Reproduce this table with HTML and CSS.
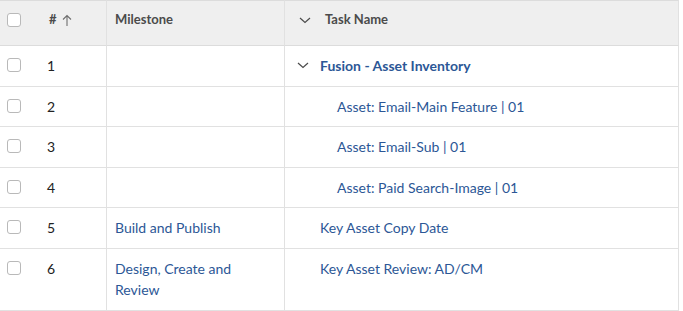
FILE: index.html
```html
<!DOCTYPE html>
<html lang="en">
<head>
  <meta charset="UTF-8" />
  <title>Tasks</title>
  <link rel="stylesheet" href="styles.css">
</head>
<body>
  <div class="grid">
    <!-- Header -->
    <div class="cell head check"><span class="box"></span></div>
    <div class="cell head num">#
      <svg class="sort" width="10" height="12" viewBox="0 0 10 12"><path d="M5 1.5V12M1 5.5L5 1.5L9 5.5" fill="none" stroke="#6e6e6e" stroke-width="1.1"/></svg>
    </div>
    <div class="cell head milestone">Milestone</div>
    <div class="cell head task">
      <svg class="chev" width="12" height="7" viewBox="0 0 12 7"><path d="M1 1L6 5.5L11 1" fill="none" stroke="#4b4b4b" stroke-width="1.2"/></svg>
      Task Name
    </div>

    <!-- Row 1 -->
    <div class="cell check"><span class="box"></span></div>
    <div class="cell num">1</div>
    <div class="cell milestone"></div>
    <div class="cell task">
      <svg class="chev" width="12" height="7" viewBox="0 0 12 7"><path d="M1 1L6 5.5L11 1" fill="none" stroke="#4b4b4b" stroke-width="1.2"/></svg>
      <a class="link parent">Fusion - Asset Inventory</a>
    </div>

    <!-- Row 2 -->
    <div class="cell check"><span class="box"></span></div>
    <div class="cell num">2</div>
    <div class="cell milestone"></div>
    <div class="cell task"><a class="link child">Asset: Email-Main Feature | 01</a></div>

    <!-- Row 3 -->
    <div class="cell check"><span class="box"></span></div>
    <div class="cell num">3</div>
    <div class="cell milestone"></div>
    <div class="cell task"><a class="link child">Asset: Email-Sub | 01</a></div>

    <!-- Row 4 -->
    <div class="cell check"><span class="box"></span></div>
    <div class="cell num">4</div>
    <div class="cell milestone"></div>
    <div class="cell task"><a class="link child">Asset: Paid Search-Image | 01</a></div>

    <!-- Row 5 -->
    <div class="cell check"><span class="box"></span></div>
    <div class="cell num">5</div>
    <div class="cell milestone"><a class="link">Build and Publish</a></div>
    <div class="cell task"><a class="link leaf">Key Asset Copy Date</a></div>

    <!-- Row 6 -->
    <div class="cell check"><span class="box"></span></div>
    <div class="cell num">6</div>
    <div class="cell milestone"><a class="link">Design, Create and Review</a></div>
    <div class="cell task"><a class="link leaf">Key Asset Review: AD/CM</a></div>
  </div>
</body>
</html>
```

FILE: styles.css
```css
* {
  box-sizing: border-box;
  margin: 0;
  padding: 0;
}

body {
  font-family: Lato, "Open Sans", sans-serif;
  font-size: 14px;
  color: #222;
  background: #fff;
  overflow: hidden;
}

/* === GRID === */
.grid {
  display: grid;
  grid-template-columns: 36px 70px 178px 395px;
  width: 679px;
}

.cell {
  padding: 9px 8px;
  line-height: 21.5px;
  border-bottom: 1px solid #e1e1e1;
  display: flex;
  align-items: flex-start;
}

.milestone,
.task {
  border-left: 1px solid #e1e1e1;
}

.task {
  border-right: 1px solid #e1e1e1;
  padding-left: 12px;
}

/* Header */
.head {
  background: #efefef;
  border-top: 1px solid #dcdcdc;
  border-bottom-color: #dcdcdc;
  height: 46px;
  align-items: center;
  padding-top: 3px;
  font-weight: 700;
  font-size: 13px;
  color: #4b4b4b;
}

.head.num {
  padding-left: 13px;
}

.head.task {
  padding-left: 14px;
}

.sort {
  margin-left: 5px;
  margin-top: -1px;
}

.chev {
  margin-right: 11px;
  flex: none;
}

.head .chev {
  margin-right: 14px;
}

.task .chev {
  margin-top: 7px;
}

.head.task .chev {
  margin-top: 0;
}

/* Checkbox */
.check {
  padding-left: 7px;
}

.box {
  display: block;
  width: 14px;
  height: 14px;
  border: 1px solid #b9b9b9;
  border-radius: 3px;
  background: #fff;
  margin-top: 3px;
}

.head .box {
  margin-top: 0;
}

.num {
  padding-left: 11px;
}

.milestone {
  padding-left: 8px;
}

/* Links */
.link {
  color: #2c5796;
  text-decoration: none;
}

.parent {
  font-weight: 700;
}

.child {
  padding-left: 40px;
}

.leaf {
  padding-left: 23px;
}
```
